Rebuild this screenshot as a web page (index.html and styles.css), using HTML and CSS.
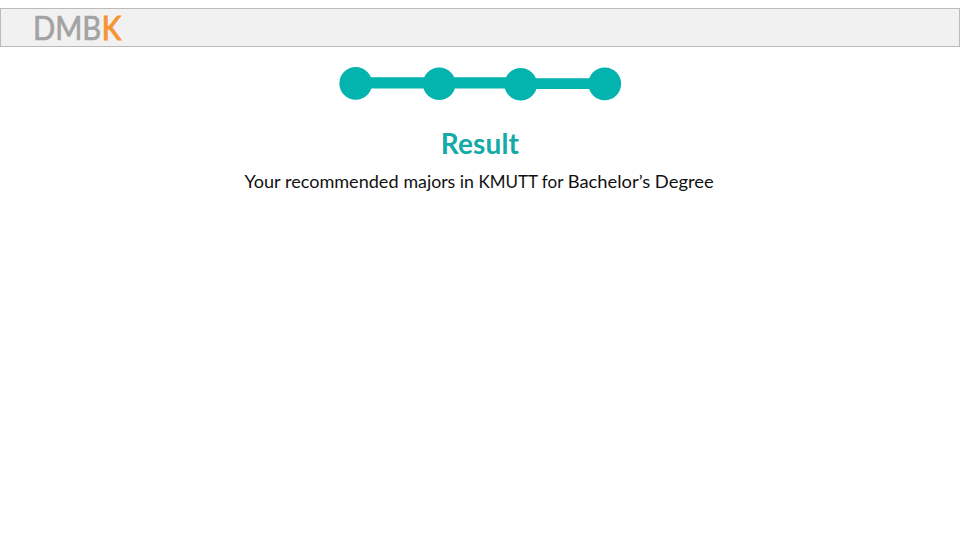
FILE: index.html
```
<!DOCTYPE html>
<html lang="en">
<head>
<meta charset="utf-8">
<title>DMBK Result</title>
<link rel="stylesheet" href="styles.css">
</head>
<body>
<header class="bar">
  <svg class="logo" width="130" height="37" aria-label="DMBK">
    <text x="32" y="30.8" textLength="88" lengthAdjust="spacingAndGlyphs">DMB<tspan class="logo-accent" dx="0.5">K</tspan></text>
  </svg>
</header>
<main class="content">
  <svg class="steps" width="284" height="36" viewBox="338 66 284 36">
    <path d="M355 77.3H521V88.4H355zM521 78.2H604V89H521z"/>
    <circle cx="355.7" cy="83.4" r="16.3"/>
    <circle cx="439.2" cy="83.8" r="16.3"/>
    <circle cx="520.7" cy="84.3" r="16.3"/>
    <circle cx="604.7" cy="83.8" r="16.4"/>
  </svg>
  <h1 class="title">Result</h1>
  <svg class="subtitle" width="472" height="28">
    <text y="20.8"><tspan x="0.5" textLength="154" lengthAdjust="spacingAndGlyphs">Your recommended</tspan> <tspan x="159.5" textLength="70.5" lengthAdjust="spacingAndGlyphs">majors in</tspan> <tspan x="234.5" textLength="84.5" lengthAdjust="spacingAndGlyphs">KMUTT for</tspan> <tspan x="323.7" textLength="146" lengthAdjust="spacingAndGlyphs">Bachelor’s Degree</tspan></text>
  </svg>
</main>
</body>
</html>
```
FILE: styles.css
```
* { box-sizing: border-box; }
body { margin: 0; padding-top: 8px; height: 540px; background: #fff; }
.bar { height: 39px; border: 1px solid #bababa; background: #f1f1f1; }
.logo { display: block; overflow: visible; }
.logo text { font: 400 33px Lato, sans-serif; fill: #a3a3a3; stroke: #a3a3a3; stroke-width: .7px; }
.logo .logo-accent { fill: #f79433; stroke: #f79433; stroke-width: 1.1px; }
.content { display: flex; flex-direction: column; align-items: center; padding-top: 19px; }
.steps { display: block; fill: #02b3ae; }
.title { margin: 24px 0 0; font: 700 28px/34px Lato, sans-serif; letter-spacing: .15px; color: #14aaa5; }
.subtitle { display: block; margin-top: 7px; overflow: visible; fill: #111; font: 400 18px Lato, sans-serif; }
```
